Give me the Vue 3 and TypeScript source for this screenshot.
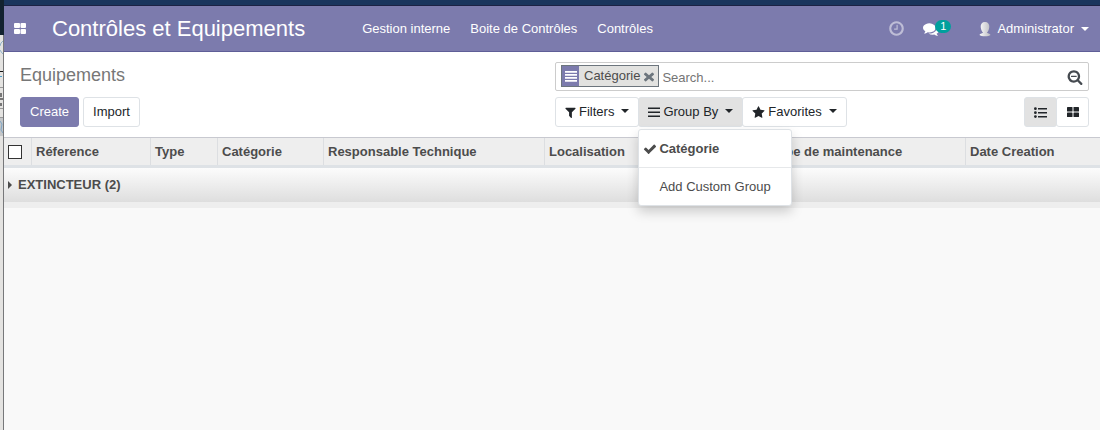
<script setup lang="ts">
import { ref } from 'vue'

interface Column {
  label: string
  key: string
}

const sections: string[] = ['Gestion interne', 'Boite de Contrôles', 'Contrôles']
const columns: Column[] = [
  { label: 'Réference', key: 'reference' },
  { label: 'Type', key: 'type' },
  { label: 'Catégorie', key: 'category' },
  { label: 'Responsable Technique', key: 'technician' },
  { label: 'Localisation', key: 'location' },
  { label: 'Type de maintenance', key: 'maintenance' },
  { label: 'Date Creation', key: 'created' },
]
const query = ref('')
const groupOpen = ref(true)
const grouped = ref(true)
const view = ref<'list' | 'kanban'>('list')
</script>

<template>
  <div class="desktop">
    <div class="behind" aria-hidden="true">
      <svg width="4" height="430" viewBox="0 0 4 430">
        <rect width="4" height="35" fill="#12222f" />
        <rect y="35" width="4" height="395" fill="#e4e3e1" />
        <path d="M3 41L1 43L0 46M0 50L2 53L3 54" stroke="#8fb0c8" fill="none" />
        <path d="M0 71.500H3" stroke="#111" />
        <path d="M0 76.500H2" stroke="#4a9cc8" />
        <path d="M0 87.500H3M0 108.500H3M0 117.500H3" stroke="#999" />
        <path d="M0 99H3M1 93V97M1 103V106" stroke="#777" stroke-width="2" />
        <rect y="118" width="3" height="18" fill="#c4c6c8" />
        <path d="M0 121L2 124L1 130L3 133" stroke="#7fa6c6" fill="none" />
        <path d="M3.500 35V430" stroke="#77787a" />
      </svg>
    </div>
    <div class="window">
      <div class="strip"></div>
      <header class="navbar">
        <button class="apps" type="button" aria-label="Applications">
          <svg width="12" height="11" viewBox="0 0 12 11" fill="currentColor">
            <rect width="6" height="5" rx="1" /><rect x="6.500" width="5.500" height="5" rx="1" />
            <rect y="6" width="6" height="5" rx="1" /><rect x="6.500" y="6" width="5.500" height="5" rx="1" />
          </svg>
        </button>
        <a class="brand" href="#">Contrôles et Equipements</a>
        <nav class="sections">
          <a v-for="s in sections" :key="s" href="#">{{ s }}</a>
        </nav>
        <div class="systray">
          <button class="clock" type="button" aria-label="Activities">
            <svg width="17" height="17" viewBox="0 0 1792 1792" fill="currentColor"><path d="M1024 544v448q0 14-9 23t-23 9h-320q-14 0-23-9t-9-23v-64q0-14 9-23t23-9h224v-352q0-14 9-23t23-9h64q14 0 23 9t9 23zm416 352q0-148-73-273t-198-198-273-73-273 73-198 198-73 273 73 273 198 198 273 73 273-73 198-198 73-273zm224 0q0 209-103 385.500t-279.500 279.500-385.500 103-385.500-103-279.500-279.500-103-385.500 103-385.500 279.500-279.500 385.500-103 385.500 103 279.500 279.500 103 385.500z" /></svg>
          </button>
          <button class="chat" type="button" aria-label="Conversations">
            <svg width="16" height="16" viewBox="0 0 1792 1792" fill="currentColor"><path d="M1408 768q0 139-94 257t-256.500 186.500-353.500 68.500q-86 0-176-16-124 88-278 128-36 9-86 16h-3q-11 0-20.500-8t-11.500-21q-1-3-1-6.500t.5-6.500 2-6l2.500-5 3.500-5.500 4-5 4.500-5 4-4.500q5-6 23-25t26-29.500 22.500-29 25-38.500 20.500-44q-124-72-195-177t-71-224q0-139 94-257t256.500-186.500 353.500-68.500 353.500 68.500 256.500 186.500 94 257zm384 256q0 120-71 224.500t-195 176.500q10 24 20.500 44t25 38.500 22.500 29 26 29.500 23 25q1 1 4 4.500t4.500 5 4 5 3.500 5.500l2.500 5 2 6 .5 6.500-1 6.500q-3 14-13 22t-22 7q-50-7-86-16-154-40-278-128-90 16-176 16-271 0-472-132 58 4 88 4 161 0 309-45t264-129q125-92 192-212t67-254q0-77-23-152 129 71 204 178t75 230z" /></svg>
            <span class="badge">1</span>
          </button>
          <button class="user" type="button">
            <svg width="12" height="16" viewBox="0 0 12 16">
              <defs>
                <linearGradient id="bust" x1="0" x2="1"><stop offset="0" stop-color="#fafafa" /><stop offset="1" stop-color="#bcbcc2" /></linearGradient>
              </defs>
              <path d="M6 1C9 1 10.500 3 10.300 6C10 9 9 10.500 8 11.500C8 12.500 11 12.500 11.500 14C10 15.700 2 15.700 .5 14C1 12.500 4 12.500 4 11.500C3 10.500 2 9 1.700 6C1.500 3 3 1 6 1Z" fill="url(#bust)" />
            </svg>
            <span>Administrator</span>
            <i class="caret"></i>
          </button>
        </div>
      </header>

      <section class="panel">
        <h1>Equipements</h1>
        <div class="search">
          <span class="facet">
            <span class="facet-icon">
              <svg width="12" height="11" viewBox="0 0 12 11" fill="#fff"><path d="M0 0h12v1.800H0zM0 3h12v1.800H0zM0 6h12v1.800H0zM0 9h12v1.800H0z" /></svg>
            </span>
            <span class="facet-label">Catégorie</span>
            <button type="button" aria-label="Remove Catégorie">
              <svg width="10" height="10" viewBox="110 110 1572 1572" fill="#6c757d"><path d="M1690 1322q0 40-28 68l-176 176q-28 28-68 28t-68-28l-454-384-454 384q-28 28-68 28t-68-28l-176-176q-28-28-28-68t28-68l404-358-404-358q-28-28-28-68t28-68l176-176q28-28 68-28t68 28l454 384 454-384q28-28 68-28t68 28l176 176q28 28 28 68t-28 68l-404 358 404 358q28 28 28 68z" /></svg>
            </button>
          </span>
          <input v-model="query" type="text" placeholder="Search..." aria-label="Search">
          <button class="magnifier" type="button" aria-label="Advanced search">
            <svg width="16" height="16" viewBox="0 0 1792 1792" fill="#454a50"><path d="M1088 800v64q0 13-9.500 22.500t-22.500 9.500h-576q-13 0-22.500-9.500t-9.500-22.500v-64q0-13 9.500-22.500t22.500-9.500h576q13 0 22.500 9.500t9.500 22.500zm128 32q0-185-131.500-316.500t-316.500-131.500-316.500 131.500-131.500 316.500 131.500 316.500 316.500 131.500 316.500-131.500 131.500-316.500zm512 832q0 53-37.500 90.500t-90.500 37.500q-54 0-90-38l-343-342q-179 124-399 124-143 0-273.500-55.500t-225-150-150-225-55.500-273.500 55.500-273.500 150-225 225-150 273.500-55.500 273.500 55.500 225 150 150 225 55.500 273.500q0 220-124 399l343 343q37 37 37 90z" /></svg>
          </button>
        </div>
        <div class="actions">
          <button class="btn primary" type="button">Create</button>
          <button class="btn" type="button">Import</button>
        </div>
        <div class="tools">
          <div class="group">
            <button class="btn tool" type="button">
              <svg width="11" height="13" viewBox="140 0 1516 1792" fill="currentColor"><path d="M1595 295q17 41-14 70l-493 493v742q0 42-39 59-13 5-25 5-27 0-45-19l-256-256q-19-19-19-45v-486l-493-493q-31-29-14-70 17-39 59-39h1280q42 0 59 39z" /></svg>
              <span>Filters</span><i class="caret"></i>
            </button>
            <div class="dropdown">
              <button class="btn tool open" type="button" :aria-expanded="groupOpen" @click="groupOpen = !groupOpen">
                <svg width="12" height="12" viewBox="0 0 12 12" fill="currentColor"><path d="M0 1.500h12v1.500H0zM0 5.500h12v1.500H0zM0 9.500h12v1.500H0z" /></svg>
                <span>Group By</span><i class="caret"></i>
              </button>
              <div v-if="groupOpen" class="menu" role="menu">
                <button class="chosen" type="button" role="menuitemcheckbox" :aria-checked="grouped" @click="grouped = !grouped">
                  <svg v-if="grouped" width="14" height="14" viewBox="0 0 1792 1792" fill="currentColor"><path d="M1671 566q0 40-28 68l-724 724-136 136q-28 28-68 28t-68-28l-136-136-362-362q-28-28-28-68t28-68l136-136q28-28 68-28t68 28l294 295 656-657q28-28 68-28t68 28l136 136q28 28 28 68z" /></svg>
                  Catégorie
                </button>
                <hr>
                <button type="button" role="menuitem">Add Custom Group</button>
              </div>
            </div>
            <button class="btn tool" type="button">
              <svg width="13" height="13" viewBox="0 0 1792 1792" fill="currentColor"><path d="M1728 647q0 22-26 48l-363 354 86 500q1 7 1 20 0 21-10.500 35.500t-30.500 14.500q-19 0-40-12l-449-236-449 236q-22 12-40 12-21 0-31.500-14.500t-10.500-35.500q0-6 2-20l86-500-364-354q-25-27-25-48 0-37 56-46l502-73 225-455q19-41 49-41t49 41l225 455 502 73q56 9 56 46z" /></svg>
              <span>Favorites</span><i class="caret"></i>
            </button>
          </div>
          <div class="group">
            <button class="btn view" :class="{ open: view === 'list' }" type="button" aria-label="View list" @click="view = 'list'">
              <svg width="13" height="11" viewBox="0 0 13 11" fill="currentColor"><path d="M4 1h9v1.500H4zM4 5h9v1.500H4zM4 9h9v1.500H4z" /><circle cx="1.400" cy="1.700" r="1.400" /><circle cx="1.400" cy="5.700" r="1.400" /><circle cx="1.400" cy="9.600" r="1.400" /></svg>
            </button>
            <button class="btn view" :class="{ open: view === 'kanban' }" type="button" aria-label="View kanban" @click="view = 'kanban'">
              <svg width="12" height="10" viewBox="0 0 12 10" fill="currentColor"><rect width="5.500" height="4.500" rx=".6" /><rect x="6.500" width="5.500" height="4.500" rx=".6" /><rect y="5.500" width="5.500" height="4.500" rx=".6" /><rect x="6.500" y="5.500" width="5.500" height="4.500" rx=".6" /></svg>
            </button>
          </div>
        </div>
      </section>

      <table>
        <colgroup>
          <col class="c-check">
          <col v-for="c in columns" :key="c.key" :class="'c-' + c.key">
        </colgroup>
        <thead>
          <tr>
            <th><input type="checkbox" aria-label="Select all"></th>
            <th v-for="c in columns" :key="c.key" scope="col">{{ c.label }}</th>
          </tr>
        </thead>
        <tbody>
          <tr>
            <th :colspan="columns.length + 1" scope="rowgroup">
              <button class="fold" type="button" aria-expanded="false"><i></i>EXTINCTEUR (2)</button>
            </th>
          </tr>
        </tbody>
        <tfoot>
          <tr><td :colspan="columns.length + 1"></td></tr>
        </tfoot>
      </table>
    </div>
  </div>
</template>

<style>
body {
  margin: 0;
  background: #f9f9f9;
}
</style>

<style scoped>
.desktop {
  display: grid;
  grid-template-columns: 4px 1fr;
  min-height: 100vh;
  font: 13px/20px "Liberation Sans", Arial, sans-serif;
  color: #4c4c4c;
}
.desktop *, .desktop *::before { box-sizing: border-box; }
button, input { font: inherit; color: inherit; margin: 0; }
button {
  display: flex;
  align-items: center;
  padding: 0;
  border: 0;
  background: none;
  cursor: pointer;
}
a { color: inherit; text-decoration: none; }
svg { display: block; flex: none; }
.behind { background: #e4e3e1; }
.window { min-width: 0; background: #f9f9f9; }
.strip { height: 6px; background: #1a355d; border-bottom: 1px solid #1c2244; }

.navbar {
  display: flex;
  align-items: center;
  height: 46px;
  padding: 0 11px 0 10px;
  background: #7c7bad;
  border-bottom: 1px solid #5f5e97;
  color: #fff;
}
.brand { margin-left: 26px; font-size: 22px; line-height: 32px; white-space: nowrap; }
.sections { display: flex; gap: 20px; margin-left: 57px; white-space: nowrap; }
.systray { display: flex; align-items: center; margin-left: auto; }
.clock { opacity: 0.5; }
.chat { margin-left: 18px; }
.badge {
  height: 13px;
  padding: 0 5px;
  margin: 0 0 5px -4px;
  border-radius: 7px;
  background: #00a09d;
  font-size: 11px;
  line-height: 12px;
}
.user { margin-left: 28px; gap: 6px; }
.user .caret { margin-left: 1px; }
.caret {
  border: 4px solid transparent;
  border-top-color: currentColor;
  border-bottom: 0;
}

.panel {
  display: grid;
  grid-template-columns: 1fr 1fr;
  gap: 6px 1px;
  padding: 10px 11px 10px 16px;
  background: #fff;
  border-bottom: 1px solid #c8c9d0;
}
h1 { margin: 0; font-size: 18px; font-weight: 400; line-height: 26px; color: #777; }
.search {
  display: flex;
  align-items: center;
  height: 29px;
  padding: 0 5px;
  border: 1px solid #ccc;
  border-radius: 2px;
}
.facet {
  display: flex;
  height: 22px;
  margin-bottom: 1px;
  border: 1px solid #6c757d;
  background: #e2e2e0;
}
.facet-icon { display: grid; place-items: center; width: 17px; background: #7c7bad; }
.facet-label { padding: 0 4px 0 5px; }
.facet button { padding: 2px 4px 0 0; }
.search input {
  flex: 1;
  min-width: 0;
  height: 22px;
  padding: 1px 3px 0;
  border: 0;
  outline: 0;
  background: none;
}
.search input::placeholder { color: #757575; opacity: 1; }
.actions { display: flex; gap: 4px; }
.btn {
  height: 30px;
  padding: 0 9px;
  border: 1px solid #dee2e6;
  border-radius: 3px;
  background: #fff;
  color: #212529;
  white-space: nowrap;
}
.primary { border-color: #7c7bad; background: #7c7bad; color: #fff; }
.tools, .group { display: flex; }
.tools { justify-content: space-between; }
.group > * + * { margin-left: -1px; }
.tool { gap: 3px; }
.tool .caret { margin: 0 0 3px 4px; }
.open { background: #e2e2e2; }
.view { justify-content: center; width: 33px; padding: 0; }
.dropdown { position: relative; }
.menu {
  position: absolute;
  z-index: 1;
  top: 32px;
  left: 0;
  width: 154px;
  border: 1px solid #dee2e6;
  border-radius: 3px;
  background: #fff;
  box-shadow: 0 6px 12px rgba(0, 0, 0, 0.18);
}
.menu button { width: 100%; height: 37px; padding-left: 20px; white-space: nowrap; }
.menu .chosen { padding-left: 4px; gap: 2px; font-weight: 700; }
hr { margin: 0; border: 0; border-top: 1px solid #e6e8ea; }

table { width: 100%; border-collapse: separate; border-spacing: 0; table-layout: fixed; }
.c-check { width: 28px; }
.c-reference { width: 119px; }
.c-type { width: 67px; }
.c-category { width: 106px; }
.c-technician { width: 221px; }
.c-location { width: 222px; }
.c-maintenance { width: 199px; }
th { padding: 0; text-align: left; font-weight: 700; }
thead th {
  height: 30px;
  padding: 0 4px;
  background: #eee;
  border-bottom: 3px solid #dee2e6;
  box-shadow: inset -1px 0 #dcdee1;
  white-space: nowrap;
}
thead th:last-child { box-shadow: none; }
thead input {
  appearance: none;
  display: block;
  width: 14px;
  height: 14px;
  border: 1px solid #333;
  background: #fff;
}
thead input:checked { background: #7c7bad; }
tbody th { height: 34px; background: linear-gradient(#fcfcfc, #dedede); }
.fold { padding-left: 4px; gap: 6px; font-weight: 700; }
.fold i {
  border: 4px solid transparent;
  border-left-color: currentColor;
  border-right: 0;
}
tfoot td { height: 6px; padding: 0; background: #eee; }
</style>
